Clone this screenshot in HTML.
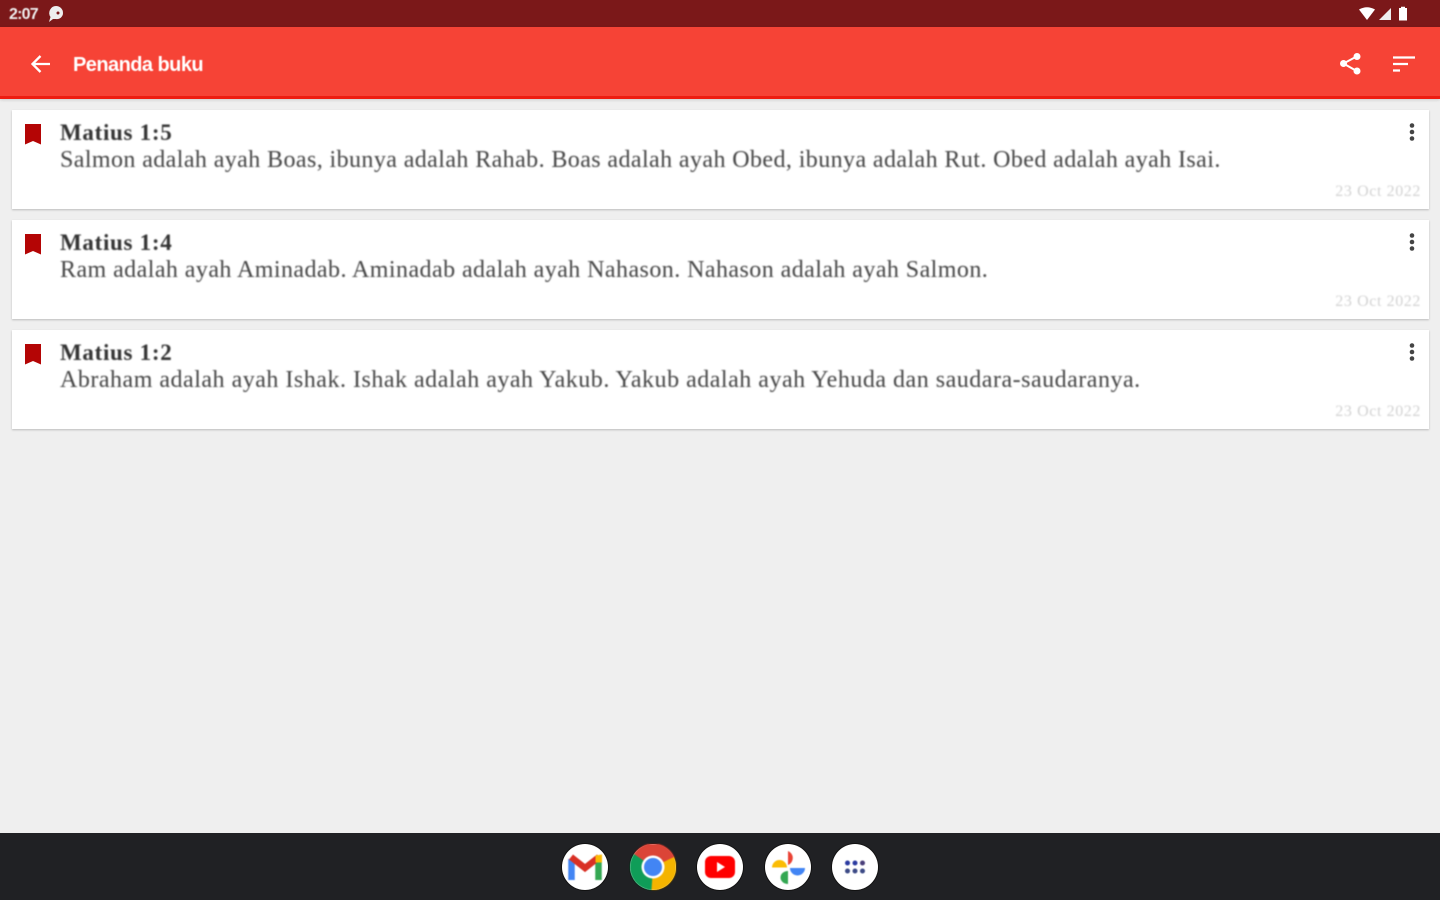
<!DOCTYPE html>
<html><head><meta charset="utf-8">
<style>
html,body{margin:0;padding:0;width:1440px;height:900px;overflow:hidden;background:#efefef;position:relative}
.abs{position:absolute}
#sb{left:0;top:0;width:1440px;height:27px;background:#7b1819}
#ab{left:0;top:27px;width:1440px;height:69px;background:#f64336;border-bottom:3px solid #ee1c10;box-shadow:0 1px 3px rgba(0,0,0,.15)}
.t{font-family:"Liberation Sans",sans-serif;color:#fff;white-space:nowrap;filter:blur(.6px)}
.card{left:12px;width:1417px;height:99px;background:#fff;box-shadow:0 1px 2px rgba(0,0,0,.22)}
.h{position:absolute;left:48px;top:9px;font:bold 23px/28px "Liberation Serif",serif;letter-spacing:.7px;color:#333;white-space:nowrap;filter:blur(.7px)}
.b{position:absolute;left:48px;top:36px;font:24px/28px "Liberation Serif",serif;letter-spacing:.41px;color:#444;white-space:nowrap;filter:blur(.7px)}
.d{position:absolute;right:8px;top:73px;font:16px/18px "Liberation Serif",serif;letter-spacing:.6px;color:#d2d2d2;white-space:nowrap;filter:blur(.8px)}
.bm{position:absolute;left:13px;top:14px}
.m{position:absolute;left:1397px;top:13px}
#nav{left:0;top:833px;width:1440px;height:67px;background:#202124}
.ic{position:absolute;top:844px;width:46px;height:46px;border-radius:50%;background:#fff;box-shadow:0 0 0 1px #111}
.ic svg{filter:blur(.4px)}
</style></head><body>
<div class="abs" id="sb"></div>
<div class="abs t" style="left:9px;top:6px;font-size:16px;line-height:18px;font-weight:bold;letter-spacing:-.8px;color:#eee">2:07</div>
<svg class="abs" style="left:47px;top:5px" width="18" height="18" viewBox="0 0 18 18"><path d="M9 1a7 7 0 0 1 7 7 6 6 0 0 1-7 6H6l-4 3 1.500-5A7 7 0 0 1 9 1z" fill="#eee"/><circle cx="11" cy="8" r="1.500" fill="#7b1819"/></svg>
<svg class="abs" style="left:1358px;top:6px" width="54" height="16" viewBox="0 0 54 16"><path d="M1 3.500Q9-1 17 3.500L9 14z" fill="#fff"/><path d="M33 2v12H21z" fill="#eee"/><path d="M41 2h2V.8h4V2h2v12.500H41z" fill="#fff"/></svg>
<div class="abs" id="ab"></div>
<svg class="abs" style="left:29px;top:52px" width="24" height="24" viewBox="0 0 24 24"><path d="M21 12H4M11.500 4L3.500 12l8 8" fill="none" stroke="#fff" stroke-width="2.300"/></svg>
<div class="abs t" style="left:73px;top:53px;font-size:20px;line-height:24px;font-weight:bold;letter-spacing:-.55px">Penanda buku</div>
<svg class="abs" style="left:1338px;top:51px" width="26" height="26" viewBox="0 0 26 26"><path d="M19.500 5L5.500 12.500l14 8" fill="none" stroke="#fff" stroke-width="2"/><circle cx="19" cy="5.500" r="3.500" fill="#fff"/><circle cx="5.500" cy="12.500" r="3.500" fill="#fff"/><circle cx="19" cy="20" r="3.500" fill="#fff"/></svg>
<svg class="abs" style="left:1392px;top:54px" width="24" height="20" viewBox="0 0 24 20"><path d="M1 3.500h22M1 10h15M1 16.500h7" stroke="#fff" stroke-width="2.200" fill="none"/></svg>

<div class="abs card" style="top:110px">
<svg class="bm" width="16" height="21" viewBox="0 0 16 21"><path d="M0 0h16v20.500L8 17 0 20.500z" fill="#b40505"/></svg>
<div class="h">Matius 1:5</div>
<div class="b">Salmon adalah ayah Boas, ibunya adalah Rahab. Boas adalah ayah Obed, ibunya adalah Rut. Obed adalah ayah Isai.</div>
<div class="d">23 Oct 2022</div>
<svg class="m" width="6" height="18" viewBox="0 0 6 18"><circle cx="3" cy="2.500" r="2.300" fill="#444"/><circle cx="3" cy="9" r="2.300" fill="#444"/><circle cx="3" cy="15.500" r="2.300" fill="#444"/></svg>
</div>
<div class="abs card" style="top:220px">
<svg class="bm" width="16" height="21" viewBox="0 0 16 21"><path d="M0 0h16v20.500L8 17 0 20.500z" fill="#b40505"/></svg>
<div class="h">Matius 1:4</div>
<div class="b" style="letter-spacing:.44px">Ram adalah ayah Aminadab. Aminadab adalah ayah Nahason. Nahason adalah ayah Salmon.</div>
<div class="d">23 Oct 2022</div>
<svg class="m" width="6" height="18" viewBox="0 0 6 18"><circle cx="3" cy="2.500" r="2.300" fill="#444"/><circle cx="3" cy="9" r="2.300" fill="#444"/><circle cx="3" cy="15.500" r="2.300" fill="#444"/></svg>
</div>
<div class="abs card" style="top:330px">
<svg class="bm" width="16" height="21" viewBox="0 0 16 21"><path d="M0 0h16v20.500L8 17 0 20.500z" fill="#b40505"/></svg>
<div class="h">Matius 1:2</div>
<div class="b" style="letter-spacing:.51px">Abraham adalah ayah Ishak. Ishak adalah ayah Yakub. Yakub adalah ayah Yehuda dan saudara-saudaranya.</div>
<div class="d">23 Oct 2022</div>
<svg class="m" width="6" height="18" viewBox="0 0 6 18"><circle cx="3" cy="2.500" r="2.300" fill="#444"/><circle cx="3" cy="9" r="2.300" fill="#444"/><circle cx="3" cy="15.500" r="2.300" fill="#444"/></svg>
</div>

<div class="abs" id="nav"></div>
<div class="ic" style="left:562px"><svg width="46" height="46" viewBox="0 0 46 46">
<path d="M9.500 36V15" stroke="#4285f4" stroke-width="6.500" fill="none"/><path d="M36.500 36V15" stroke="#34a853" stroke-width="6.500" fill="none"/>
<path d="M9 13l14 11 14-11" stroke="#d93025" stroke-width="6.500" fill="none"/><path d="M33.500 11.500l6.500-1 0 8-6.500 0z" fill="#fbbc04"/></svg></div>
<div class="ic" style="left:630px"><svg width="46" height="46" viewBox="0 0 46 46">
<path d="M23 23L3.100 11.500A23 23 0 0 1 44.900 14z" fill="#db4437"/>
<path d="M23 23L44 13A23 23 0 0 1 21 46z" fill="#f4b400"/>
<path d="M23 23L21.500 46A23 23 0 0 1 4 10z" fill="#0f9d58"/>
<circle cx="23" cy="23" r="11.500" fill="#fff"/><circle cx="23" cy="23" r="9" fill="#4285f4"/></svg></div>
<div class="ic" style="left:697px"><svg width="46" height="46" viewBox="0 0 46 46"><rect x="8" y="12" width="30" height="22" rx="6" fill="#f00"/><path d="M20 18l8 5-8 5z" fill="#fff"/></svg></div>
<div class="ic" style="left:765px"><svg width="46" height="46" viewBox="0 0 46 46">
<path d="M23 21V7a7.500 7.500 0 0 1 0 14z" fill="#ea4335"/>
<path d="M25 24H40a7.500 7.500 0 0 1-15 0z" fill="#4285f4"/>
<path d="M23 27V40a7.500 6.500 0 0 1 0-13z" fill="#34a853"/>
<path d="M22 23.500H7a7.500 7.500 0 0 1 15 0z" fill="#fbbc04"/></svg></div>
<div class="ic" style="left:832px"><svg width="46" height="46" viewBox="0 0 46 46" fill="#3c4a86">
<circle cx="15.500" cy="19" r="2.500" fill="#2a3aa0"/><circle cx="23" cy="19" r="2.500" fill="#2a3aa0"/><circle cx="30.500" cy="19" r="2.500" fill="#4a3f7a"/>
<circle cx="15.500" cy="27" r="2.500"/><circle cx="23" cy="27" r="2.500"/><circle cx="30.500" cy="27" r="2.500"/></svg></div>
</body></html>
